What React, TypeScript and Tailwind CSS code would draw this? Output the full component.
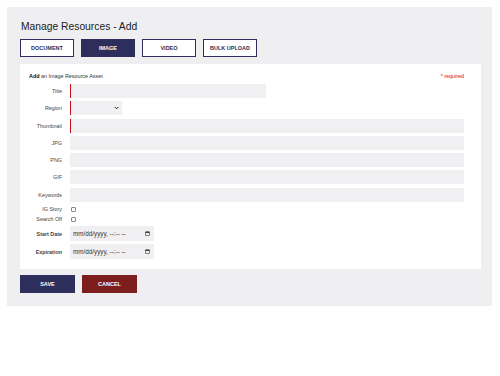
import React from "react";

const tabs = ["DOCUMENT", "IMAGE", "VIDEO", "BULK UPLOAD"];

const Label = ({ text, bold }: { text: string; bold?: boolean }) => (
  <div
    className={`w-[43px] shrink-0 text-right pr-[1px] text-[5.4px] text-[#444] ${
      bold ? "font-bold text-[#222]" : ""
    }`}
  >
    {text}
  </div>
);

const TextRow = ({
  label,
  required,
  width,
}: {
  label: string;
  required?: boolean;
  width?: string;
}) => (
  <div className="flex items-center gap-[7px] h-[14px]">
    <Label text={label} />
    <div
      className={`h-[14px] bg-[#f0f0f2] ${width ?? "flex-1"} ${
        required ? "border-l border-[#c1121f]" : ""
      }`}
    />
  </div>
);

const CheckRow = ({ label }: { label: string }) => (
  <div className="flex items-center gap-[8px] h-[8px]">
    <Label text={label} />
    <span className="w-[5px] h-[5px] border border-[#888] rounded-[1px] bg-white" />
  </div>
);

const DateRow = ({ label }: { label: string }) => (
  <div className="flex items-center gap-[7px] h-[15px]">
    <Label text={label} bold />
    <div className="w-[84px] h-[15px] bg-[#f0f0f2] flex items-center justify-between pl-[3px] pr-[4px]">
      <span className="text-[6.3px] text-[#333]">mm/dd/yyyy, --:-- --</span>
      <svg width="5" height="5" viewBox="0 0 10 10">
        <rect x="1" y="1.5" width="8" height="7.5" rx="0.8" fill="none" stroke="#333" strokeWidth="1.2" />
        <rect x="1" y="1.5" width="8" height="2.3" fill="#333" />
      </svg>
    </div>
  </div>
);

const App = () => {
  return (
    <div
      className="w-[500px] h-[376px] bg-white pt-[7px] px-[7px]"
      style={{ fontFamily: '"Liberation Sans", Arial, sans-serif' }}
    >
      <div className="w-[485px] h-[299px] bg-[#efeff1] pl-[13px] pr-[11px] pt-[13px]">
        <h1 className="text-[10.3px] leading-[13px] text-[#1a1a1a] ml-[1px]">
          Manage Resources - Add
        </h1>
        <div className="flex gap-[7px] mt-[6px]">
          {tabs.map((t) => (
            <button
              key={t}
              className={`w-[54px] h-[18px] text-[5.5px] font-semibold border border-[#2e2e5c] ${
                t === "IMAGE" ? "bg-[#2e2e5c] text-white" : "bg-white text-[#2e2e5c]"
              }`}
            >
              {t}
            </button>
          ))}
        </div>
        <div className="mt-[7px] bg-white h-[205px] pl-[9px] pr-[17px] pt-[9px]">
          <div className="flex justify-between items-center h-[6px] text-[5.4px]">
            <span className="text-[#333]">
              <b className="text-[#111]">Add</b> an Image Resource Asset
            </span>
            <span className="text-[#d11]">* required</span>
          </div>
          <div className="flex flex-col gap-[3.3px] mt-[5px] -ml-[9px]">
            <TextRow label="Title" required width="w-[196px]" />
            <div className="flex items-center gap-[7px] h-[14px]">
              <Label text="Region" />
              <div className="w-[52px] h-[14px] bg-[#f0f0f2] border-l border-[#c1121f] flex items-center justify-end pr-[3px]">
                <svg width="5" height="4" viewBox="0 0 10 8">
                  <path d="M1.5 2 L5 5.5 L8.5 2" fill="none" stroke="#222" strokeWidth="2" />
                </svg>
              </div>
            </div>
            <TextRow label="Thumbnail" required />
            <TextRow label="JPG" />
            <TextRow label="PNG" />
            <TextRow label="GIF" />
            <TextRow label="Keywords" />
            <div className="flex flex-col gap-[2px]">
              <CheckRow label="IG Story" />
              <CheckRow label="Search Off" />
            </div>
            <div className="flex flex-col gap-[3px]">
              <DateRow label="Start Date" />
              <DateRow label="Expiration" />
            </div>
          </div>
        </div>
        <div className="flex gap-[7px] mt-[6px]">
          <button className="w-[55px] h-[18px] bg-[#2e2e5c] text-white text-[5.5px] font-bold">
            SAVE
          </button>
          <button className="w-[55px] h-[18px] bg-[#7e1d1d] text-white text-[5.5px] font-bold">
            CANCEL
          </button>
        </div>
      </div>
    </div>
  );
};

export default App;
